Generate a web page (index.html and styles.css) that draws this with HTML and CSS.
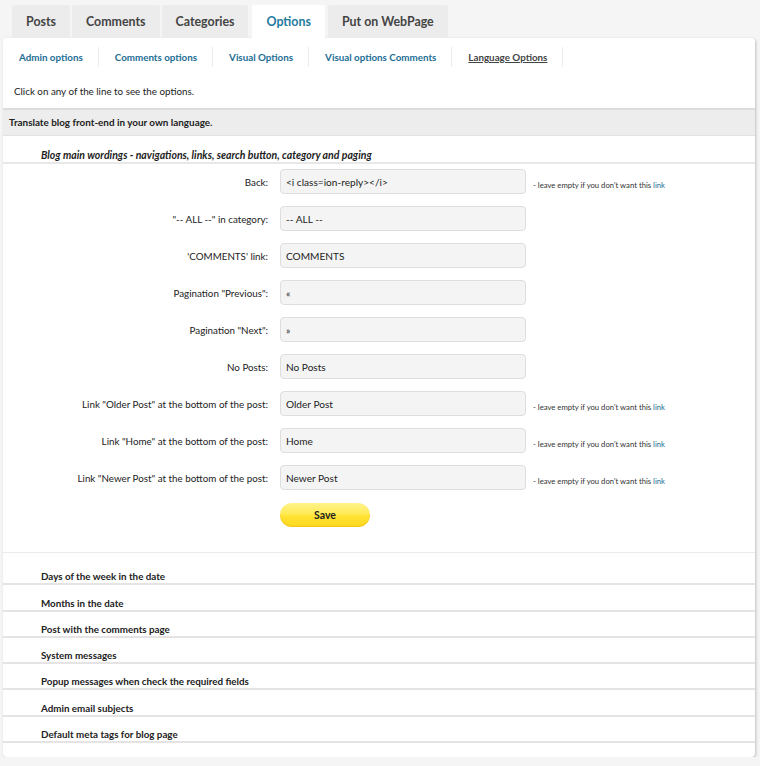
FILE: index.html
```html
<!DOCTYPE html>
<html lang="en">
<head>
<meta charset="utf-8">
<title>Options - Language Options</title>
<link rel="stylesheet" href="styles.css">
</head>
<body>
<div class="page">
  <nav class="tabs">
    <a class="tab">Posts</a>
    <a class="tab">Comments</a>
    <a class="tab">Categories</a>
    <a class="tab tab-active">Options</a>
    <a class="tab">Put on WebPage</a>
  </nav>
  <div class="panel">
    <ul class="subtabs">
      <li><a class="sublink">Admin options</a></li>
      <li><a class="sublink">Comments options</a></li>
      <li><a class="sublink">Visual Options</a></li>
      <li><a class="sublink">Visual options Comments</a></li>
      <li><a class="sublink sublink-current">Language Options</a></li>
    </ul>
    <p class="hint">Click on any of the line to see the options.</p>
    <div class="section-bar">Translate blog front-end in your own language.</div>
    <div class="group">
      <h3 class="group-title">Blog main wordings - navigations, links, search button, category and paging</h3>
      <form class="form">
        <div class="row"><label class="label">Back:</label><input class="field" type="text" value="<i class=ion-reply></i>"><span class="note">- leave empty if you don't want this <a class="note-link">link</a></span></div>
        <div class="row"><label class="label">"-- ALL --" in category:</label><input class="field" type="text" value="-- ALL --"></div>
        <div class="row"><label class="label">'COMMENTS' link:</label><input class="field" type="text" value="COMMENTS"></div>
        <div class="row"><label class="label">Pagination "Previous":</label><input class="field" type="text" value="«"></div>
        <div class="row"><label class="label">Pagination "Next":</label><input class="field" type="text" value="»"></div>
        <div class="row"><label class="label">No Posts:</label><input class="field" type="text" value="No Posts"></div>
        <div class="row"><label class="label">Link "Older Post" at the bottom of the post:</label><input class="field" type="text" value="Older Post"><span class="note">- leave empty if you don't want this <a class="note-link">link</a></span></div>
        <div class="row"><label class="label">Link "Home" at the bottom of the post:</label><input class="field" type="text" value="Home"><span class="note">- leave empty if you don't want this <a class="note-link">link</a></span></div>
        <div class="row"><label class="label">Link "Newer Post" at the bottom of the post:</label><input class="field" type="text" value="Newer Post"><span class="note">- leave empty if you don't want this <a class="note-link">link</a></span></div>
        <div class="row row-actions"><span class="label"></span><button class="save" type="button">Save</button></div>
      </form>
    </div>
    <ul class="list">
      <li class="item">Days of the week in the date</li>
      <li class="item">Months in the date</li>
      <li class="item">Post with the comments page</li>
      <li class="item">System messages</li>
      <li class="item">Popup messages when check the required fields</li>
      <li class="item">Admin email subjects</li>
      <li class="item">Default meta tags for blog page</li>
    </ul>
  </div>
</div>
</body>
</html>
```
FILE: styles.css
```css
* { box-sizing: border-box; }
html, body {
  margin: 0;
  padding: 0;
  background: #f5f5f5;
}
body {
  font-family: Lato, "Open Sans", sans-serif;
  font-size: 9.8px;
  color: #222;
}
.page {
  padding: 5px 5px 0 3px;
}
.tabs {
  display: flex;
  gap: 2px;
  margin-left: 9px;
  height: 33px;
}
.tab {
  display: flex;
  align-items: center;
  padding: 0 14px;
  background: #ececec;
  color: #444;
  font-weight: bold;
  font-size: 12.4px;
  border-radius: 2px 2px 0 0;
}
.tab-active {
  background: #fff;
  color: #1f7aa0;
  margin: 0 1px 0 2px;
}
.panel {
  background: #fff;
  border-radius: 4px;
  box-shadow: 1px 1px 3px rgba(0,0,0,0.22);
  padding-bottom: 14px;
}
.subtabs {
  list-style: none;
  margin: 0;
  padding: 0;
  display: flex;
  height: 37px;
  align-items: center;
}
.subtabs li {
  padding: 0 15px 0 16px;
  border-right: 1px solid #ececec;
  line-height: 20px;
}
.sublink {
  color: #1d6e95;
  font-weight: bold;
  font-size: 9.8px;
}
.sublink-current {
  color: #444;
  text-decoration: underline;
}
.hint {
  margin: 0;
  height: 33px;
  line-height: 33px;
  padding-left: 11px;
}
.section-bar {
  background: #ededed;
  border-top: 2px solid #dcdcdc;
  border-bottom: 1px solid #e2e2e2;
  height: 28px;
  line-height: 25px;
  padding-left: 6px;
  font-weight: bold;
  font-size: 9.9px;
}
.group-title {
  margin: 0;
  padding: 12px 0 0 38px;
  line-height: 14px;
  font-size: 10.5px;
  font-weight: bold;
  font-style: italic;
  border-bottom: 2px solid #e8e8e8;
}
.form {
  display: flex;
  flex-direction: column;
  gap: 12px;
  padding: 5px 0 25px;
  border-bottom: 1px solid #ebebeb;
}
.row {
  display: flex;
  align-items: center;
  height: 25px;
}
.row-actions {
  margin-top: 1px;
  height: 24px;
}
.label {
  width: 265px;
  text-align: right;
  flex: none;
  margin-right: 12px;
}
.field {
  width: 246px;
  height: 25px;
  border: 1px solid #dedede;
  border-radius: 4px;
  background: #f4f4f4;
  padding: 0 5px;
  font-family: Lato, "Open Sans", sans-serif;
  font-size: 10.1px;
  color: #222;
}
.note {
  margin-left: 7px;
  margin-top: 7px;
  font-size: 7.7px;
  color: #333;
}
.note-link {
  color: #1d6e95;
}
.save {
  width: 90px;
  height: 24px;
  border: none;
  border-radius: 12px;
  background: linear-gradient(#fff38c 0%, #ffeb55 45%, #ffe233 55%, #ffd91e 100%);
  box-shadow: inset 0 -1px 1px rgba(220,170,0,0.4);
  font-family: Lato, "Open Sans", sans-serif;
  font-size: 10.5px;
  font-weight: bold;
  color: #222;
  padding: 0;
}
.list {
  list-style: none;
  margin: 0;
  padding: 6px 0 0;
}
.item {
  padding: 11.3px 0 0 38px;
  height: 26.3px;
  line-height: 13px;
  font-weight: bold;
  border-bottom: 2px solid #e6e3e4;
}
```
